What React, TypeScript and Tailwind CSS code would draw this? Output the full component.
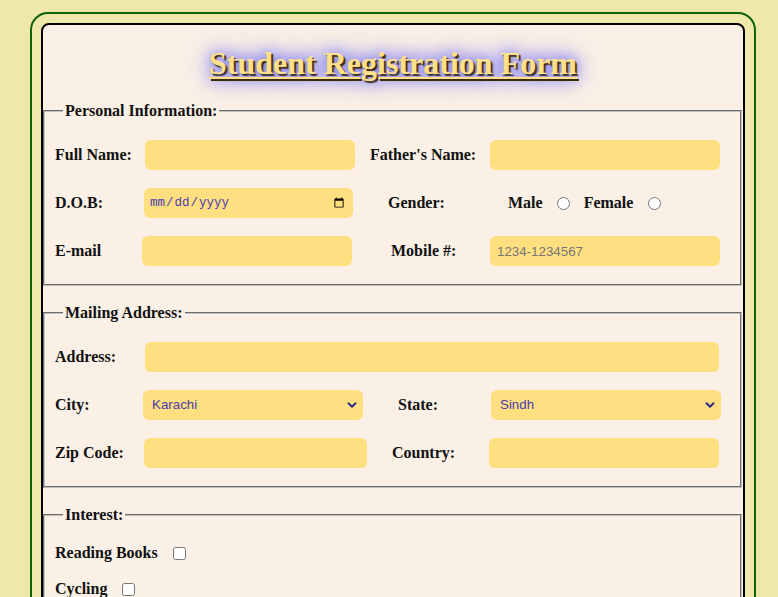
import React from 'react';

const serif = "font-['Liberation_Serif','Times_New_Roman',serif]";
const base =
  "h-[30px] rounded-[6px] bg-[#ffdf80] px-[6px] font-normal text-[#4b3bb0] outline-none placeholder:text-[#767676]";
const field = `${base} text-[13.33px] font-['Liberation_Sans',Arial,sans-serif]`;

const Chevron: React.FC = () => (
  <svg
    className="pointer-events-none absolute right-[6px] top-1/2 -translate-y-1/2"
    width="10"
    height="10"
    viewBox="0 0 10 10"
    fill="none"
  >
    <path d="M1.5 3.2 L5 6.7 L8.5 3.2" stroke="#2f2a8a" strokeWidth="2" strokeLinecap="round" strokeLinejoin="round" />
  </svg>
);

const Select: React.FC<{ width: string; value: string; options: string[] }> = ({ width, value, options }) => (
  <div className={`relative ${width}`}>
    <select defaultValue={value} className={`${field} w-full appearance-none pl-[9px]`}>
      {options.map((o) => (
        <option key={o}>{o}</option>
      ))}
    </select>
    <Chevron />
  </div>
);

const App: React.FC = () => {
  return (
    <div className={`min-h-screen bg-[#eee8aa] pt-[12px] pb-[20px] ${serif}`}>
      <div className="ml-[30px] w-[726px] rounded-[18px] border-2 border-[#0f6400] p-[9px]">
        <div className="rounded-[8px] border-2 border-black bg-[#faf0e6] pb-[20px] text-[16px] font-bold text-[#111]">
          <h1 className="my-[21px] text-center text-[32px] leading-[35px] text-[#ffe08a] underline decoration-[2px] underline-offset-[3px] [text-shadow:2px_2px_1px_#3a2a05,0_0_14px_#5050ff,0_0_26px_#6a6aff]">
            Student Registration Form
          </h1>

          {/* Personal Information */}
          <fieldset className="mr-[1px] px-[10px] pt-[20px] pb-[18px] [border:2px_groove_#c0c0c0]">
            <legend className="ml-[8px] px-[2px] leading-[18px]">Personal Information:</legend>
            <div className="flex flex-col gap-[18px]">
              <div className="flex h-[30px] items-center">
                <label className="w-[90px] whitespace-nowrap">Full Name:</label>
                <input className={`${field} w-[210px]`} />
                <label className="ml-[15px] w-[120px] whitespace-nowrap">Father's Name:</label>
                <input className={`${field} w-[230px]`} />
              </div>
              <div className="flex h-[30px] items-center">
                <label className="w-[89px] whitespace-nowrap">D.O.B:</label>
                <input
                  type="date"
                  className={`${base} w-[209px] pl-[5px] font-['Liberation_Mono',monospace] text-[12.5px]`}
                />
                <label className="ml-[35px] w-[120px] whitespace-nowrap">Gender:</label>
                <span>Male</span>
                <input type="radio" name="gender" className="ml-[14px] h-[13px] w-[13px]" />
                <span className="ml-[14px]">Female</span>
                <input type="radio" name="gender" className="ml-[15px] h-[13px] w-[13px]" />
              </div>
              <div className="flex h-[30px] items-center">
                <label className="w-[87px] whitespace-nowrap">E-mail</label>
                <input type="email" className={`${field} w-[210px]`} />
                <label className="ml-[39px] w-[99px] whitespace-nowrap">Mobile #:</label>
                <input className={`${field} w-[230px] pl-[7px]`} placeholder="1234-1234567" />
              </div>
            </div>
          </fieldset>

          {/* Mailing Address */}
          <fieldset className="mt-[18px] mr-[1px] px-[10px] pt-[20px] pb-[18px] [border:2px_groove_#c0c0c0]">
            <legend className="ml-[8px] px-[2px] leading-[18px]">Mailing Address:</legend>
            <div className="flex flex-col gap-[18px]">
              <div className="flex h-[30px] items-center">
                <label className="w-[90px] whitespace-nowrap">Address:</label>
                <input className={`${field} w-[574px]`} />
              </div>
              <div className="flex h-[30px] items-center">
                <label className="w-[88px] whitespace-nowrap">City:</label>
                <Select width="w-[220px]" value="Karachi" options={['Karachi', 'Lahore', 'Islamabad', 'Quetta', 'Peshawar']} />
                <label className="ml-[35px] w-[93px] whitespace-nowrap">State:</label>
                <Select width="w-[230px]" value="Sindh" options={['Sindh', 'Punjab', 'Balochistan', 'KPK']} />
              </div>
              <div className="flex h-[30px] items-center">
                <label className="w-[89px] whitespace-nowrap">Zip Code:</label>
                <input className={`${field} w-[223px]`} />
                <label className="ml-[25px] w-[97px] whitespace-nowrap">Country:</label>
                <input className={`${field} w-[230px]`} />
              </div>
            </div>
          </fieldset>

          {/* Interest */}
          <fieldset className="mt-[18px] mr-[1px] px-[10px] pt-[19px] pb-[18px] [border:2px_groove_#c0c0c0]">
            <legend className="ml-[8px] px-[2px] leading-[18px]">Interest:</legend>
            <div className="flex flex-col gap-[16px]">
              <div className="flex h-[20px] items-center">
                <span>Reading Books</span>
                <input type="checkbox" className="ml-[15px] h-[13px] w-[13px]" />
              </div>
              <div className="flex h-[20px] items-center">
                <span>Cycling</span>
                <input type="checkbox" className="ml-[15px] h-[13px] w-[13px]" />
              </div>
              <div className="flex h-[20px] items-center">
                <span>Cricket</span>
                <input type="checkbox" className="ml-[15px] h-[13px] w-[13px]" />
              </div>
            </div>
          </fieldset>
        </div>
      </div>
    </div>
  );
};

export default App;
